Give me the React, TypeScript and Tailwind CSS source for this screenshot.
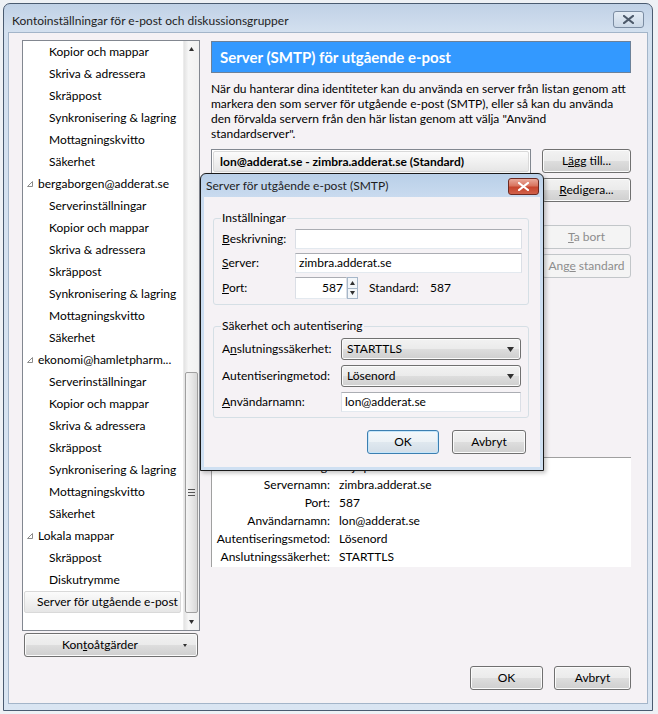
import React from 'react';

const btn = "flex items-center justify-center h-[24px] rounded-[3px] border text-[12px] leading-none";
const btnNormal = "border-[#707070] bg-[linear-gradient(180deg,#f2f2f2_0%,#ebebeb_48%,#dddddd_52%,#cfcfcf_100%)] shadow-[inset_0_0_0_1px_#fbfbfb] text-black";
const btnDisabled = "border-[#c2c6c9] bg-[#f4f4f4] text-[#8d8d8d]";
const btnFocus = "border-[#3c7fb1] bg-[linear-gradient(180deg,#f4f8fb_0%,#ecf2f6_48%,#dfe8ef_52%,#d3dee8_100%)] shadow-[inset_0_0_0_1px_#c6e6fa] text-black";
const input = "h-[20px] bg-white border border-[#abadb3] border-l-[#dbdfe6] border-r-[#dbdfe6] border-b-[#e3e9ef] flex items-center px-[3px] text-[12px]";
const combo = "h-[22px] rounded-[3px] border border-[#707070] bg-[linear-gradient(180deg,#f2f2f2_0%,#ebebeb_48%,#dddddd_52%,#cfcfcf_100%)] shadow-[inset_0_0_0_1px_#fbfbfb] flex items-center pl-[5px] pr-[6px] text-[12px]";

type Item = { t: string; k: 'c' | 'p' | 's' };
const C = (t: string): Item => ({ t, k: 'c' });
const accSub = ['Serverinställningar', 'Kopior och mappar', 'Skriva & adressera', 'Skräppost', 'Synkronisering & lagring', 'Mottagningskvitto', 'Säkerhet'];
const tree: Item[] = [
    ...accSub.slice(1).map(C),
    { t: 'bergaborgen@adderat.se', k: 'p' },
    ...accSub.map(C),
    { t: 'ekonomi@hamletpharm...', k: 'p' },
    ...accSub.map(C),
    { t: 'Lokala mappar', k: 'p' },
    C('Skräppost'),
    C('Diskutrymme'),
    { t: 'Server för utgående e-post', k: 's' },
];

const details = [
    ['Beskrivning:', '<ej specificerat>'],
    ['Servernamn:', 'zimbra.adderat.se'],
    ['Port:', '587'],
    ['Användarnamn:', 'lon@adderat.se'],
    ['Autentiseringsmetod:', 'Lösenord'],
    ['Anslutningssäkerhet:', 'STARTTLS'],
];

const Tri = () => (
    <svg width="6" height="6" viewBox="0 0 6 6" className="shrink-0">
        <path d="M5.5 0.5 V5.5 H0.5 Z" fill="#fff" stroke="#8c8c8c" strokeWidth="1" />
    </svg>
);

const Arrow = ({ up, size = 5 }: { up?: boolean; size?: number }) => (
    <svg width={size} height={Math.ceil(size / 2) + 1} viewBox={`0 0 ${size} ${Math.ceil(size / 2) + 1}`}>
        {up
            ? <path d={`M0 ${Math.ceil(size / 2) + 1} L${size / 2} 0 L${size} ${Math.ceil(size / 2) + 1} Z`} fill="#303030" />
            : <path d={`M0 0 L${size / 2} ${Math.ceil(size / 2) + 1} L${size} 0 Z`} fill="#303030" />}
    </svg>
);

const CloseX = ({ color }: { color: string }) => (
    <svg width="11" height="9" viewBox="0 0 11 9">
        <path d="M1 1 L10 8 M10 1 L1 8" stroke={color} strokeWidth="2.2" strokeLinecap="square" />
    </svg>
);

const App: React.FC = () => {
    return (
        <div className="relative w-[658px] h-[714px] overflow-hidden bg-[#eef1f5] pt-[3px] pl-[3px] font-['Lato','Segoe_UI',sans-serif] text-[12px] text-black">
            {/* huvudfönster */}
            <div className="w-[650px] h-[708px] border border-[#4a5b70] rounded-t-[7px] bg-[linear-gradient(180deg,#c0d1e6_0px,#d3e0ef_28px,#d9e5f2_100%)] flex flex-col">
                <div className="h-[28px] flex items-start justify-between pl-[8px] pr-[8px] shrink-0">
                    <div className="mt-[9px] leading-[16px] text-[12px] text-[#1e1e1e]">Kontoinställningar för e-post och diskussionsgrupper</div>
                    <div className="mt-[7px] w-[31px] h-[17px] rounded-[3px] border border-[#7b8ca2] bg-[linear-gradient(180deg,#e4ecf5,#cbd8e7)] flex items-center justify-center">
                        <CloseX color="#4d5a6b" />
                    </div>
                </div>
                <div className="mx-[4px] mb-[6px] flex-1 border border-[#a3b5c9] bg-[#f5f2f5] flex">
                    {/* vänster kolumn */}
                    <div className="ml-[13px] mt-[7px] flex flex-col w-[178px]">
                        <div className="h-[591px] border border-[#828790] bg-white flex">
                            <div className="flex-1 flex flex-col overflow-hidden">
                                {tree.map((it, i) =>
                                    it.k === 'c' ? (
                                        <div key={i} className="h-[22px] shrink-0 flex items-center pl-[26px] whitespace-nowrap">{it.t}</div>
                                    ) : it.k === 'p' ? (
                                        <div key={i} className="h-[22px] shrink-0 flex items-center pl-[4px] gap-[5px] whitespace-nowrap"><Tri />{it.t}</div>
                                    ) : (
                                        <div key={i} className="h-[22px] shrink-0 ml-[1px] w-[157px] flex items-center pl-[12px] whitespace-nowrap rounded-[2px] border border-[#d9d9d9] bg-[linear-gradient(180deg,#fbfbfb,#e6e6e6)]">{it.t}</div>
                                    )
                                )}
                            </div>
                            <div className="w-[16px] flex flex-col bg-[linear-gradient(90deg,#e3e3e3,#f6f6f6_30%,#f1f1f1)] border-l border-[#ececec]">
                                <div className="h-[16px] flex items-center justify-center"><Arrow up /></div>
                                <div className="h-[315px]" />
                                <div className="h-[241px] mx-[1px] rounded-[2px] border border-[#a0a0a0] bg-[linear-gradient(90deg,#f5f5f5,#e8e8e8_50%,#d8d8d8)] flex flex-col items-center justify-center gap-[2px]">
                                    <div className="w-[7px] h-px bg-[#555]" />
                                    <div className="w-[7px] h-px bg-[#555]" />
                                    <div className="w-[7px] h-px bg-[#555]" />
                                </div>
                                <div className="flex-1" />
                                <div className="h-[16px] flex items-center justify-center"><Arrow /></div>
                            </div>
                        </div>
                        <div className={`${btn} ${btnNormal} mt-[2px] ml-[2px] w-[174px]`}>
                            <span className="flex-1 text-center pl-[2px]">Kon<u className="underline">t</u>oåtgärder</span>
                            <span className="w-[24px] flex justify-center"><Arrow size={4} /></span>
                        </div>
                    </div>

                    {/* höger kolumn */}
                    <div className="ml-[11px] mt-[8px] mb-[13px] w-[420px] flex flex-col">
                        <div className="h-[32px] shrink-0 bg-[#3399ff] border border-[#6c8199] flex items-center pl-[8px] text-white font-bold text-[15px]">
                            Server (SMTP) för utgående e-post
                        </div>
                        <p className="mt-[8px] leading-[15px] whitespace-nowrap">
                            När du hanterar dina identiteter kan du använda en server från listan genom att<br />
                            markera den som server för utgående e-post (SMTP), eller så kan du använda<br />
                            den förvalda servern från den här listan genom att välja "Använd<br />
                            standardserver".
                        </p>
                        <div className="mt-[8px] flex gap-[11px]">
                            <div className="w-[320px] h-[298px] border border-[#828790] bg-white p-[1px]">
                                <div className="h-[21px] rounded-[2px] border border-[#d9d9d9] bg-[linear-gradient(180deg,#fbfbfb,#e6e6e6)] flex items-center pl-[6px] font-bold">
                                    lon@adderat.se - zimbra.adderat.se (Standard)
                                </div>
                            </div>
                            <div className="w-[89px] flex flex-col">
                                <div className={`${btn} ${btnNormal}`}><span>L<u className="underline">ä</u>gg till...</span></div>
                                <div className={`${btn} ${btnNormal} mt-[5px]`}><span><u className="underline">R</u>edigera...</span></div>
                                <div className={`${btn} ${btnDisabled} mt-[23px]`}><span><u className="underline">T</u>a bort</span></div>
                                <div className={`${btn} ${btnDisabled} mt-[5px]`}><span>Ang<u className="underline">e</u> standard</span></div>
                            </div>
                        </div>
                        <div className="mt-[10px] h-[110px] border-l border-t border-[#a0a0a0] bg-white grid grid-cols-[118px_1fr] gap-x-[9px] content-start">
                            {details.map(([l, v]) => (
                                <React.Fragment key={l}>
                                    <div className="h-[18px] flex items-center justify-end whitespace-nowrap">{l}</div>
                                    <div className="h-[18px] flex items-center">{v}</div>
                                </React.Fragment>
                            ))}
                        </div>
                        <div className="mt-auto flex justify-end gap-[11px]">
                            <div className={`${btn} ${btnNormal} w-[73px]`}>OK</div>
                            <div className={`${btn} ${btnNormal} w-[77px]`}>Avbryt</div>
                        </div>
                    </div>
                </div>
            </div>

            {/* dialog: Server för utgående e-post (SMTP) */}
            <div className="absolute left-[200px] top-[173px] w-[344px] h-[298px] border border-[#1a1a1a] rounded-t-[6px] bg-[linear-gradient(180deg,#b9cfe8_0px,#c9dbef_23px,#cfe0f2_100%)] flex flex-col shadow-[2px_2px_4px_rgba(0,0,0,0.25)]">
                <div className="h-[23px] shrink-0 flex items-start justify-between pl-[5px] pr-[4px]">
                    <div className="mt-[4px] leading-[16px] text-[#1e1e1e]">Server för utgående e-post (SMTP)</div>
                    <div className="mt-[4px] w-[31px] h-[17px] rounded-[3px] border border-[#6d2a22] bg-[linear-gradient(180deg,#e9a99b_0%,#d8745f_45%,#c7452e_55%,#d1614a_100%)] flex items-center justify-center">
                        <CloseX color="#ffffff" />
                    </div>
                </div>
                <div className="mx-[3px] mb-[3px] flex-1 bg-[#f5f2f5] flex flex-col">
                    <fieldset className="mt-[13px] ml-[9px] w-[316px] border border-[#d5dfe5] rounded-[3px] pl-[7px] pr-[6px] pb-[5px]">
                        <legend className="px-[1px] leading-[16px]">Inställningar</legend>
                        <div className="mt-[3px] flex items-center">
                            <div className="w-[74px] pl-[1px]"><u className="underline">B</u>eskrivning:</div>
                            <div className={`${input} w-[227px] border-[#5b9bd5] border-l-[#8fb9e3] border-r-[#8fb9e3] border-b-[#a9cbec]`} />
                        </div>
                        <div className="mt-[4px] flex items-center">
                            <div className="w-[74px] pl-[1px]"><u className="underline">S</u>erver:</div>
                            <div className={`${input} w-[227px]`}>zimbra.adderat.se</div>
                        </div>
                        <div className="mt-[4px] flex items-center">
                            <div className="w-[74px] pl-[1px]"><u className="underline">P</u>ort:</div>
                            <div className={`${input} h-[22px] w-[52px] justify-end`}>587</div>
                            <div className="w-[11px] h-[22px] flex flex-col border border-[#a6b7c9] bg-[#f3f6f9]">
                                <div className="flex-1 flex items-center justify-center border-b border-[#a6b7c9]"><Arrow up size={5} /></div>
                                <div className="flex-1 flex items-center justify-center"><Arrow size={5} /></div>
                            </div>
                            <div className="ml-[11px] w-[61px]">Standard:</div>
                            <div>587</div>
                        </div>
                    </fieldset>
                    <fieldset className="mt-[13px] ml-[9px] w-[316px] border border-[#d5dfe5] rounded-[3px] pl-[7px] pr-[6px] pb-[5px]">
                        <legend className="px-[1px] leading-[16px]">Säkerhet och autentisering</legend>
                        <div className="mt-[4px] flex items-center">
                            <div className="w-[120px] pl-[1px]">A<u className="underline">n</u>slutningssäkerhet:</div>
                            <div className={`${combo} w-[180px] justify-between`}>
                                <span>STARTTLS</span><Arrow size={7} />
                            </div>
                        </div>
                        <div className="mt-[5px] flex items-center">
                            <div className="w-[120px] pl-[1px]">Autent<u className="underline">i</u>seringmetod:</div>
                            <div className={`${combo} w-[180px] justify-between`}>
                                <span>Lösenord</span><Arrow size={7} />
                            </div>
                        </div>
                        <div className="mt-[5px] flex items-center">
                            <div className="w-[120px] pl-[1px]"><u className="underline">A</u>nvändarnamn:</div>
                            <div className={`${input} w-[180px]`}>lon@adderat.se</div>
                        </div>
                    </fieldset>
                    <div className="mt-[12px] mr-[14px] flex justify-end gap-[13px]">
                        <div className={`${btn} ${btnFocus} w-[72px] h-[23px]`}>OK</div>
                        <div className={`${btn} ${btnNormal} w-[74px] h-[23px]`}>Avbryt</div>
                    </div>
                </div>
            </div>
        </div>
    );
};

export default App;
